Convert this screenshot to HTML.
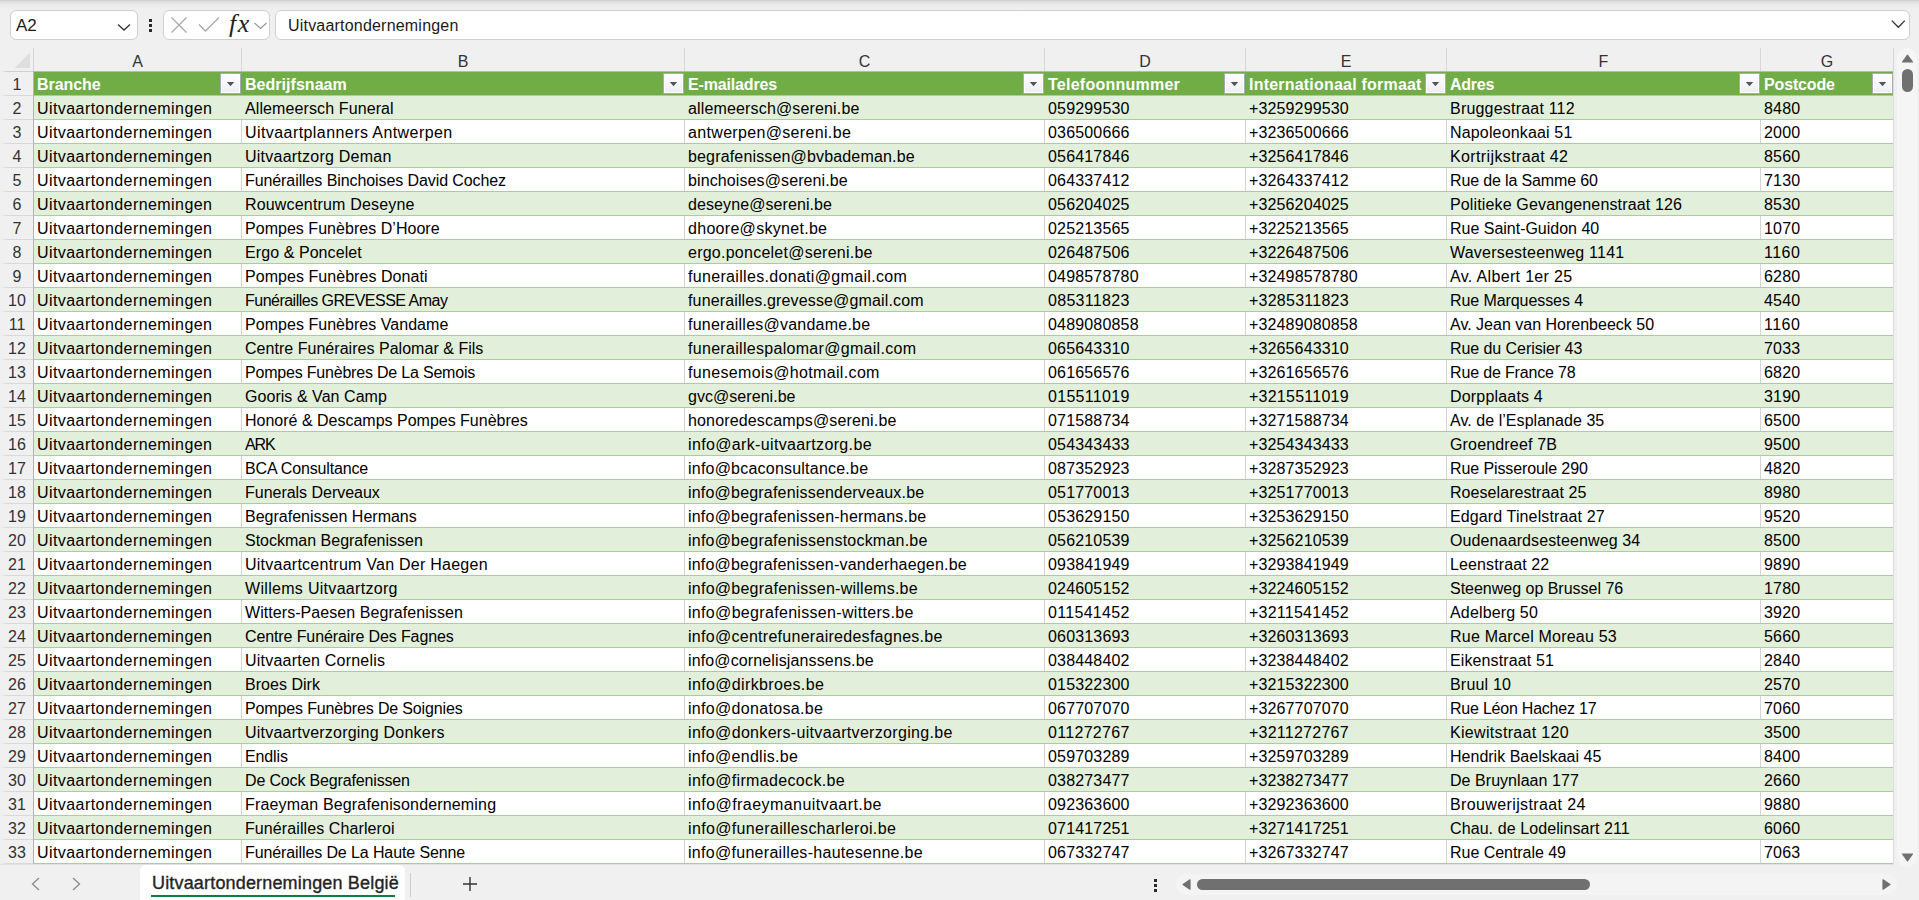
<!DOCTYPE html>
<html><head><meta charset="utf-8"><title>Excel</title>
<style>
*{margin:0;padding:0;box-sizing:border-box}
html,body{width:1919px;height:900px;overflow:hidden;background:#f0f0f0;font-family:"Liberation Sans",sans-serif;position:relative}
.a{position:absolute}
.t{position:absolute;white-space:nowrap;font-size:16px;line-height:24px;color:#000}
.h{position:absolute;white-space:nowrap;font-size:16px;line-height:24px;color:#fff;font-weight:bold}
.fb{position:absolute;width:21px;height:21px;border:1px solid #a9a7ba;background:linear-gradient(#ffffff,#eceef4);box-shadow:inset 0 0 0 1px #fff}
.rn{position:absolute;left:0;width:34px;text-align:center;font-size:16px;line-height:24px;color:#333}
.cl{position:absolute;top:48px;height:23px;text-align:center;font-size:16px;line-height:27px;color:#333}
</style></head><body>

<div class="a" style="left:0;top:0;width:1919px;height:10px;background:linear-gradient(#cbcbcb,#dedede 15%,#e9e9e9 45%,#f1f1f1 100%)"></div>
<div class="a" style="left:10px;top:10px;width:128px;height:30px;background:#fff;border:1px solid #cfcfcf;border-radius:6px"></div>
<div class="t" style="left:16px;top:14px;font-size:17px;color:#1a1a1a">A2</div>
<svg class="a" style="left:116px;top:22px" width="16" height="10" viewBox="0 0 16 10"><path d="M2 2.5 L8 8 L14 2.5" fill="none" stroke="#333" stroke-width="1.3"/></svg>
<div class="a" style="left:149px;top:19px;width:3px;height:3px;background:#2a2a2a"></div>
<div class="a" style="left:149px;top:24px;width:3px;height:3px;background:#2a2a2a"></div>
<div class="a" style="left:149px;top:29px;width:3px;height:3px;background:#2a2a2a"></div>
<div class="a" style="left:163px;top:10px;width:107px;height:30px;background:#fff;border:1px solid #cfcfcf;border-radius:6px"></div>
<svg class="a" style="left:170px;top:16px" width="18" height="18" viewBox="0 0 18 18"><path d="M1.5 1.5 L16.5 16.5 M16.5 1.5 L1.5 16.5" stroke="#a8a8a8" stroke-width="1.3" fill="none"/></svg>
<svg class="a" style="left:198px;top:16px" width="23" height="18" viewBox="0 0 23 18"><path d="M1 8.5 L7.5 15 L21 1.5" stroke="#a8a8a8" stroke-width="1.3" fill="none"/></svg>
<div class="a" style="left:229px;top:9px;font-family:'Liberation Serif',serif;font-style:italic;font-size:26px;letter-spacing:1.5px;line-height:30px;color:#222">fx</div>
<svg class="a" style="left:253px;top:21px" width="15" height="10" viewBox="0 0 15 10"><path d="M1.5 2 L7.5 7.5 L13.5 2" fill="none" stroke="#9a9a9a" stroke-width="1.2"/></svg>
<div class="a" style="left:275px;top:10px;width:1635px;height:30px;background:#fff;border:1px solid #cfcfcf;border-radius:6px"></div>
<div class="t" style="left:288px;top:14px;font-size:16px;letter-spacing:0.2px;color:#1a1a1a">Uitvaartondernemingen</div>
<svg class="a" style="left:1890px;top:18px" width="17" height="12" viewBox="0 0 17 12"><path d="M1.8 2.6 L8.3 9.2 L14.8 2.6" fill="none" stroke="#333" stroke-width="1.3"/></svg>
<svg class="a" style="left:14px;top:52px" width="17" height="16" viewBox="0 0 17 16"><path d="M0.5 16 L16 0.5 L16 16 Z" fill="#dedede"/></svg>
<div class="a" style="left:241px;top:48px;width:1px;height:23px;background:#d6d6d6"></div>
<div class="a" style="left:684px;top:48px;width:1px;height:23px;background:#d6d6d6"></div>
<div class="a" style="left:1044px;top:48px;width:1px;height:23px;background:#d6d6d6"></div>
<div class="a" style="left:1245px;top:48px;width:1px;height:23px;background:#d6d6d6"></div>
<div class="a" style="left:1446px;top:48px;width:1px;height:23px;background:#d6d6d6"></div>
<div class="a" style="left:1760px;top:48px;width:1px;height:23px;background:#d6d6d6"></div>
<div class="a" style="left:1893px;top:48px;width:1px;height:23px;background:#d6d6d6"></div>
<div class="cl" style="left:34px;width:207px">A</div>
<div class="cl" style="left:242px;width:442px">B</div>
<div class="cl" style="left:685px;width:359px">C</div>
<div class="cl" style="left:1045px;width:200px">D</div>
<div class="cl" style="left:1246px;width:200px">E</div>
<div class="cl" style="left:1447px;width:313px">F</div>
<div class="cl" style="left:1761px;width:132px">G</div>
<div class="a" style="left:0;top:71px;width:33px;height:1px;background:linear-gradient(to right,#f0f0f0,#cfcfcf 8px)"></div>
<div class="a" style="left:33px;top:71px;width:1860px;height:1px;background:#b9b6bd"></div>
<div class="a" style="left:33px;top:48px;width:1px;height:23px;background:#d6d6d6"></div>
<div class="a" style="left:33px;top:72px;width:1px;height:793px;background:#b4b4b4"></div>
<div class="a" style="left:34px;top:72px;width:1859px;height:23px;background:#70ad47"></div>
<div class="a" style="left:34px;top:95px;width:1859px;height:1px;background:#a9d08e"></div>
<div class="a" style="left:0;top:95px;width:33px;height:1px;background:linear-gradient(to right,#f0f0f0,#d9d9d9 8px)"></div>
<div class="rn" style="top:73px">1</div>
<div class="h" style="left:37px;top:73px;letter-spacing:-0.067px">Branche</div>
<div class="fb" style="left:220px;top:73px"><svg style="position:absolute;left:5px;top:7px" width="9" height="6" viewBox="0 0 9 6"><path d="M0.8 1 L8.2 1 L4.5 5.2 Z" fill="#555"/></svg></div>
<div class="h" style="left:245px;top:73px;letter-spacing:0.036px">Bedrijfsnaam</div>
<div class="fb" style="left:663px;top:73px"><svg style="position:absolute;left:5px;top:7px" width="9" height="6" viewBox="0 0 9 6"><path d="M0.8 1 L8.2 1 L4.5 5.2 Z" fill="#555"/></svg></div>
<div class="h" style="left:688px;top:73px;letter-spacing:-0.160px">E-mailadres</div>
<div class="fb" style="left:1023px;top:73px"><svg style="position:absolute;left:5px;top:7px" width="9" height="6" viewBox="0 0 9 6"><path d="M0.8 1 L8.2 1 L4.5 5.2 Z" fill="#555"/></svg></div>
<div class="h" style="left:1048px;top:73px;letter-spacing:0.246px">Telefoonnummer</div>
<div class="fb" style="left:1224px;top:73px"><svg style="position:absolute;left:5px;top:7px" width="9" height="6" viewBox="0 0 9 6"><path d="M0.8 1 L8.2 1 L4.5 5.2 Z" fill="#555"/></svg></div>
<div class="h" style="left:1249px;top:73px;letter-spacing:0.210px">Internationaal formaat</div>
<div class="fb" style="left:1425px;top:73px"><svg style="position:absolute;left:5px;top:7px" width="9" height="6" viewBox="0 0 9 6"><path d="M0.8 1 L8.2 1 L4.5 5.2 Z" fill="#555"/></svg></div>
<div class="h" style="left:1450px;top:73px;letter-spacing:-0.250px">Adres</div>
<div class="fb" style="left:1739px;top:73px"><svg style="position:absolute;left:5px;top:7px" width="9" height="6" viewBox="0 0 9 6"><path d="M0.8 1 L8.2 1 L4.5 5.2 Z" fill="#555"/></svg></div>
<div class="h" style="left:1764px;top:73px;letter-spacing:-0.143px">Postcode</div>
<div class="fb" style="left:1872px;top:73px"><svg style="position:absolute;left:5px;top:7px" width="9" height="6" viewBox="0 0 9 6"><path d="M0.8 1 L8.2 1 L4.5 5.2 Z" fill="#555"/></svg></div>
<div class="a" style="left:34px;top:96px;width:1859px;height:23px;background:#e2efda"></div>
<div class="a" style="left:34px;top:119px;width:1859px;height:1px;background:#a9d08e"></div>
<div class="a" style="left:0;top:119px;width:33px;height:1px;background:linear-gradient(to right,#f0f0f0,#d9d9d9 8px)"></div>
<div class="rn" style="top:97px">2</div>
<div class="t" style="left:37px;top:97px;letter-spacing:0.431px">Uitvaartondernemingen</div>
<div class="t" style="left:245px;top:97px;letter-spacing:0.108px">Allemeersch Funeral</div>
<div class="t" style="left:688px;top:97px;letter-spacing:0.152px">allemeersch@sereni.be</div>
<div class="t" style="left:1048px;top:97px;letter-spacing:0.176px">059299530</div>
<div class="t" style="left:1249px;top:97px;letter-spacing:0.135px">+3259299530</div>
<div class="t" style="left:1450px;top:97px;letter-spacing:0.204px">Bruggestraat 112</div>
<div class="t" style="left:1764px;top:97px;letter-spacing:0.176px">8480</div>
<div class="a" style="left:34px;top:120px;width:1859px;height:23px;background:#fff"></div>
<div class="a" style="left:241px;top:120px;width:1px;height:23px;background:#d4d4d4"></div>
<div class="a" style="left:684px;top:120px;width:1px;height:23px;background:#d4d4d4"></div>
<div class="a" style="left:1044px;top:120px;width:1px;height:23px;background:#d4d4d4"></div>
<div class="a" style="left:1245px;top:120px;width:1px;height:23px;background:#d4d4d4"></div>
<div class="a" style="left:1446px;top:120px;width:1px;height:23px;background:#d4d4d4"></div>
<div class="a" style="left:1760px;top:120px;width:1px;height:23px;background:#d4d4d4"></div>
<div class="a" style="left:34px;top:143px;width:1859px;height:1px;background:#a9d08e"></div>
<div class="a" style="left:0;top:143px;width:33px;height:1px;background:linear-gradient(to right,#f0f0f0,#d9d9d9 8px)"></div>
<div class="rn" style="top:121px">3</div>
<div class="t" style="left:37px;top:121px;letter-spacing:0.431px">Uitvaartondernemingen</div>
<div class="t" style="left:245px;top:121px;letter-spacing:0.426px">Uitvaartplanners Antwerpen</div>
<div class="t" style="left:688px;top:121px;letter-spacing:0.333px">antwerpen@sereni.be</div>
<div class="t" style="left:1048px;top:121px;letter-spacing:0.176px">036500666</div>
<div class="t" style="left:1249px;top:121px;letter-spacing:0.135px">+3236500666</div>
<div class="t" style="left:1450px;top:121px;letter-spacing:0.157px">Napoleonkaai 51</div>
<div class="t" style="left:1764px;top:121px;letter-spacing:0.176px">2000</div>
<div class="a" style="left:34px;top:144px;width:1859px;height:23px;background:#e2efda"></div>
<div class="a" style="left:34px;top:167px;width:1859px;height:1px;background:#a9d08e"></div>
<div class="a" style="left:0;top:167px;width:33px;height:1px;background:linear-gradient(to right,#f0f0f0,#d9d9d9 8px)"></div>
<div class="rn" style="top:145px">4</div>
<div class="t" style="left:37px;top:145px;letter-spacing:0.431px">Uitvaartondernemingen</div>
<div class="t" style="left:245px;top:145px;letter-spacing:0.237px">Uitvaartzorg Deman</div>
<div class="t" style="left:688px;top:145px;letter-spacing:0.159px">begrafenissen@bvbademan.be</div>
<div class="t" style="left:1048px;top:145px;letter-spacing:0.176px">056417846</div>
<div class="t" style="left:1249px;top:145px;letter-spacing:0.135px">+3256417846</div>
<div class="t" style="left:1450px;top:145px;letter-spacing:0.372px">Kortrijkstraat 42</div>
<div class="t" style="left:1764px;top:145px;letter-spacing:0.176px">8560</div>
<div class="a" style="left:34px;top:168px;width:1859px;height:23px;background:#fff"></div>
<div class="a" style="left:241px;top:168px;width:1px;height:23px;background:#d4d4d4"></div>
<div class="a" style="left:684px;top:168px;width:1px;height:23px;background:#d4d4d4"></div>
<div class="a" style="left:1044px;top:168px;width:1px;height:23px;background:#d4d4d4"></div>
<div class="a" style="left:1245px;top:168px;width:1px;height:23px;background:#d4d4d4"></div>
<div class="a" style="left:1446px;top:168px;width:1px;height:23px;background:#d4d4d4"></div>
<div class="a" style="left:1760px;top:168px;width:1px;height:23px;background:#d4d4d4"></div>
<div class="a" style="left:34px;top:191px;width:1859px;height:1px;background:#a9d08e"></div>
<div class="a" style="left:0;top:191px;width:33px;height:1px;background:linear-gradient(to right,#f0f0f0,#d9d9d9 8px)"></div>
<div class="rn" style="top:169px">5</div>
<div class="t" style="left:37px;top:169px;letter-spacing:0.431px">Uitvaartondernemingen</div>
<div class="t" style="left:245px;top:169px;letter-spacing:-0.089px">Funérailles Binchoises David Cochez</div>
<div class="t" style="left:688px;top:169px;letter-spacing:0.108px">binchoises@sereni.be</div>
<div class="t" style="left:1048px;top:169px;letter-spacing:0.176px">064337412</div>
<div class="t" style="left:1249px;top:169px;letter-spacing:0.135px">+3264337412</div>
<div class="t" style="left:1450px;top:169px;letter-spacing:-0.144px">Rue de la Samme 60</div>
<div class="t" style="left:1764px;top:169px;letter-spacing:0.176px">7130</div>
<div class="a" style="left:34px;top:192px;width:1859px;height:23px;background:#e2efda"></div>
<div class="a" style="left:34px;top:215px;width:1859px;height:1px;background:#a9d08e"></div>
<div class="a" style="left:0;top:215px;width:33px;height:1px;background:linear-gradient(to right,#f0f0f0,#d9d9d9 8px)"></div>
<div class="rn" style="top:193px">6</div>
<div class="t" style="left:37px;top:193px;letter-spacing:0.431px">Uitvaartondernemingen</div>
<div class="t" style="left:245px;top:193px;letter-spacing:0.171px">Rouwcentrum Deseyne</div>
<div class="t" style="left:688px;top:193px;letter-spacing:0.091px">deseyne@sereni.be</div>
<div class="t" style="left:1048px;top:193px;letter-spacing:0.176px">056204025</div>
<div class="t" style="left:1249px;top:193px;letter-spacing:0.135px">+3256204025</div>
<div class="t" style="left:1450px;top:193px;letter-spacing:0.144px">Politieke Gevangenenstraat 126</div>
<div class="t" style="left:1764px;top:193px;letter-spacing:0.176px">8530</div>
<div class="a" style="left:34px;top:216px;width:1859px;height:23px;background:#fff"></div>
<div class="a" style="left:241px;top:216px;width:1px;height:23px;background:#d4d4d4"></div>
<div class="a" style="left:684px;top:216px;width:1px;height:23px;background:#d4d4d4"></div>
<div class="a" style="left:1044px;top:216px;width:1px;height:23px;background:#d4d4d4"></div>
<div class="a" style="left:1245px;top:216px;width:1px;height:23px;background:#d4d4d4"></div>
<div class="a" style="left:1446px;top:216px;width:1px;height:23px;background:#d4d4d4"></div>
<div class="a" style="left:1760px;top:216px;width:1px;height:23px;background:#d4d4d4"></div>
<div class="a" style="left:34px;top:239px;width:1859px;height:1px;background:#a9d08e"></div>
<div class="a" style="left:0;top:239px;width:33px;height:1px;background:linear-gradient(to right,#f0f0f0,#d9d9d9 8px)"></div>
<div class="rn" style="top:217px">7</div>
<div class="t" style="left:37px;top:217px;letter-spacing:0.431px">Uitvaartondernemingen</div>
<div class="t" style="left:245px;top:217px;letter-spacing:0.033px">Pompes Funèbres D’Hoore</div>
<div class="t" style="left:688px;top:217px;letter-spacing:0.297px">dhoore@skynet.be</div>
<div class="t" style="left:1048px;top:217px;letter-spacing:0.176px">025213565</div>
<div class="t" style="left:1249px;top:217px;letter-spacing:0.135px">+3225213565</div>
<div class="t" style="left:1450px;top:217px;letter-spacing:-0.015px">Rue Saint-Guidon 40</div>
<div class="t" style="left:1764px;top:217px;letter-spacing:0.176px">1070</div>
<div class="a" style="left:34px;top:240px;width:1859px;height:23px;background:#e2efda"></div>
<div class="a" style="left:34px;top:263px;width:1859px;height:1px;background:#a9d08e"></div>
<div class="a" style="left:0;top:263px;width:33px;height:1px;background:linear-gradient(to right,#f0f0f0,#d9d9d9 8px)"></div>
<div class="rn" style="top:241px">8</div>
<div class="t" style="left:37px;top:241px;letter-spacing:0.431px">Uitvaartondernemingen</div>
<div class="t" style="left:245px;top:241px;letter-spacing:0.077px">Ergo &amp; Poncelet</div>
<div class="t" style="left:688px;top:241px;letter-spacing:0.249px">ergo.poncelet@sereni.be</div>
<div class="t" style="left:1048px;top:241px;letter-spacing:0.176px">026487506</div>
<div class="t" style="left:1249px;top:241px;letter-spacing:0.135px">+3226487506</div>
<div class="t" style="left:1450px;top:241px;letter-spacing:0.226px">Waversesteenweg 1141</div>
<div class="t" style="left:1764px;top:241px;letter-spacing:0.473px">1160</div>
<div class="a" style="left:34px;top:264px;width:1859px;height:23px;background:#fff"></div>
<div class="a" style="left:241px;top:264px;width:1px;height:23px;background:#d4d4d4"></div>
<div class="a" style="left:684px;top:264px;width:1px;height:23px;background:#d4d4d4"></div>
<div class="a" style="left:1044px;top:264px;width:1px;height:23px;background:#d4d4d4"></div>
<div class="a" style="left:1245px;top:264px;width:1px;height:23px;background:#d4d4d4"></div>
<div class="a" style="left:1446px;top:264px;width:1px;height:23px;background:#d4d4d4"></div>
<div class="a" style="left:1760px;top:264px;width:1px;height:23px;background:#d4d4d4"></div>
<div class="a" style="left:34px;top:287px;width:1859px;height:1px;background:#a9d08e"></div>
<div class="a" style="left:0;top:287px;width:33px;height:1px;background:linear-gradient(to right,#f0f0f0,#d9d9d9 8px)"></div>
<div class="rn" style="top:265px">9</div>
<div class="t" style="left:37px;top:265px;letter-spacing:0.431px">Uitvaartondernemingen</div>
<div class="t" style="left:245px;top:265px;letter-spacing:0.048px">Pompes Funèbres Donati</div>
<div class="t" style="left:688px;top:265px;letter-spacing:0.321px">funerailles.donati@gmail.com</div>
<div class="t" style="left:1048px;top:265px;letter-spacing:0.176px">0498578780</div>
<div class="t" style="left:1249px;top:265px;letter-spacing:0.138px">+32498578780</div>
<div class="t" style="left:1450px;top:265px;letter-spacing:0.335px">Av. Albert 1er 25</div>
<div class="t" style="left:1764px;top:265px;letter-spacing:0.176px">6280</div>
<div class="a" style="left:34px;top:288px;width:1859px;height:23px;background:#e2efda"></div>
<div class="a" style="left:34px;top:311px;width:1859px;height:1px;background:#a9d08e"></div>
<div class="a" style="left:0;top:311px;width:33px;height:1px;background:linear-gradient(to right,#f0f0f0,#d9d9d9 8px)"></div>
<div class="rn" style="top:289px">10</div>
<div class="t" style="left:37px;top:289px;letter-spacing:0.431px">Uitvaartondernemingen</div>
<div class="t" style="left:245px;top:289px;letter-spacing:-0.513px">Funérailles GREVESSE Amay</div>
<div class="t" style="left:688px;top:289px;letter-spacing:0.141px">funerailles.grevesse@gmail.com</div>
<div class="t" style="left:1048px;top:289px;letter-spacing:0.308px">085311823</div>
<div class="t" style="left:1249px;top:289px;letter-spacing:0.243px">+3285311823</div>
<div class="t" style="left:1450px;top:289px;letter-spacing:-0.080px">Rue Marquesses 4</div>
<div class="t" style="left:1764px;top:289px;letter-spacing:0.176px">4540</div>
<div class="a" style="left:34px;top:312px;width:1859px;height:23px;background:#fff"></div>
<div class="a" style="left:241px;top:312px;width:1px;height:23px;background:#d4d4d4"></div>
<div class="a" style="left:684px;top:312px;width:1px;height:23px;background:#d4d4d4"></div>
<div class="a" style="left:1044px;top:312px;width:1px;height:23px;background:#d4d4d4"></div>
<div class="a" style="left:1245px;top:312px;width:1px;height:23px;background:#d4d4d4"></div>
<div class="a" style="left:1446px;top:312px;width:1px;height:23px;background:#d4d4d4"></div>
<div class="a" style="left:1760px;top:312px;width:1px;height:23px;background:#d4d4d4"></div>
<div class="a" style="left:34px;top:335px;width:1859px;height:1px;background:#a9d08e"></div>
<div class="a" style="left:0;top:335px;width:33px;height:1px;background:linear-gradient(to right,#f0f0f0,#d9d9d9 8px)"></div>
<div class="rn" style="top:313px">11</div>
<div class="t" style="left:37px;top:313px;letter-spacing:0.431px">Uitvaartondernemingen</div>
<div class="t" style="left:245px;top:313px;letter-spacing:0.036px">Pompes Funèbres Vandame</div>
<div class="t" style="left:688px;top:313px;letter-spacing:0.234px">funerailles@vandame.be</div>
<div class="t" style="left:1048px;top:313px;letter-spacing:0.176px">0489080858</div>
<div class="t" style="left:1249px;top:313px;letter-spacing:0.138px">+32489080858</div>
<div class="t" style="left:1450px;top:313px;letter-spacing:0.004px">Av. Jean van Horenbeeck 50</div>
<div class="t" style="left:1764px;top:313px;letter-spacing:0.473px">1160</div>
<div class="a" style="left:34px;top:336px;width:1859px;height:23px;background:#e2efda"></div>
<div class="a" style="left:34px;top:359px;width:1859px;height:1px;background:#a9d08e"></div>
<div class="a" style="left:0;top:359px;width:33px;height:1px;background:linear-gradient(to right,#f0f0f0,#d9d9d9 8px)"></div>
<div class="rn" style="top:337px">12</div>
<div class="t" style="left:37px;top:337px;letter-spacing:0.431px">Uitvaartondernemingen</div>
<div class="t" style="left:245px;top:337px;letter-spacing:0.031px">Centre Funéraires Palomar &amp; Fils</div>
<div class="t" style="left:688px;top:337px;letter-spacing:0.301px">funeraillespalomar@gmail.com</div>
<div class="t" style="left:1048px;top:337px;letter-spacing:0.176px">065643310</div>
<div class="t" style="left:1249px;top:337px;letter-spacing:0.135px">+3265643310</div>
<div class="t" style="left:1450px;top:337px;letter-spacing:-0.066px">Rue du Cerisier 43</div>
<div class="t" style="left:1764px;top:337px;letter-spacing:0.176px">7033</div>
<div class="a" style="left:34px;top:360px;width:1859px;height:23px;background:#fff"></div>
<div class="a" style="left:241px;top:360px;width:1px;height:23px;background:#d4d4d4"></div>
<div class="a" style="left:684px;top:360px;width:1px;height:23px;background:#d4d4d4"></div>
<div class="a" style="left:1044px;top:360px;width:1px;height:23px;background:#d4d4d4"></div>
<div class="a" style="left:1245px;top:360px;width:1px;height:23px;background:#d4d4d4"></div>
<div class="a" style="left:1446px;top:360px;width:1px;height:23px;background:#d4d4d4"></div>
<div class="a" style="left:1760px;top:360px;width:1px;height:23px;background:#d4d4d4"></div>
<div class="a" style="left:34px;top:383px;width:1859px;height:1px;background:#a9d08e"></div>
<div class="a" style="left:0;top:383px;width:33px;height:1px;background:linear-gradient(to right,#f0f0f0,#d9d9d9 8px)"></div>
<div class="rn" style="top:361px">13</div>
<div class="t" style="left:37px;top:361px;letter-spacing:0.431px">Uitvaartondernemingen</div>
<div class="t" style="left:245px;top:361px;letter-spacing:-0.200px">Pompes Funèbres De La Semois</div>
<div class="t" style="left:688px;top:361px;letter-spacing:0.340px">funesemois@hotmail.com</div>
<div class="t" style="left:1048px;top:361px;letter-spacing:0.176px">061656576</div>
<div class="t" style="left:1249px;top:361px;letter-spacing:0.135px">+3261656576</div>
<div class="t" style="left:1450px;top:361px;letter-spacing:-0.156px">Rue de France 78</div>
<div class="t" style="left:1764px;top:361px;letter-spacing:0.176px">6820</div>
<div class="a" style="left:34px;top:384px;width:1859px;height:23px;background:#e2efda"></div>
<div class="a" style="left:34px;top:407px;width:1859px;height:1px;background:#a9d08e"></div>
<div class="a" style="left:0;top:407px;width:33px;height:1px;background:linear-gradient(to right,#f0f0f0,#d9d9d9 8px)"></div>
<div class="rn" style="top:385px">14</div>
<div class="t" style="left:37px;top:385px;letter-spacing:0.431px">Uitvaartondernemingen</div>
<div class="t" style="left:245px;top:385px;letter-spacing:0.047px">Gooris &amp; Van Camp</div>
<div class="t" style="left:688px;top:385px;letter-spacing:0.045px">gvc@sereni.be</div>
<div class="t" style="left:1048px;top:385px;letter-spacing:0.308px">015511019</div>
<div class="t" style="left:1249px;top:385px;letter-spacing:0.243px">+3215511019</div>
<div class="t" style="left:1450px;top:385px;letter-spacing:0.182px">Dorpplaats 4</div>
<div class="t" style="left:1764px;top:385px;letter-spacing:0.176px">3190</div>
<div class="a" style="left:34px;top:408px;width:1859px;height:23px;background:#fff"></div>
<div class="a" style="left:241px;top:408px;width:1px;height:23px;background:#d4d4d4"></div>
<div class="a" style="left:684px;top:408px;width:1px;height:23px;background:#d4d4d4"></div>
<div class="a" style="left:1044px;top:408px;width:1px;height:23px;background:#d4d4d4"></div>
<div class="a" style="left:1245px;top:408px;width:1px;height:23px;background:#d4d4d4"></div>
<div class="a" style="left:1446px;top:408px;width:1px;height:23px;background:#d4d4d4"></div>
<div class="a" style="left:1760px;top:408px;width:1px;height:23px;background:#d4d4d4"></div>
<div class="a" style="left:34px;top:431px;width:1859px;height:1px;background:#a9d08e"></div>
<div class="a" style="left:0;top:431px;width:33px;height:1px;background:linear-gradient(to right,#f0f0f0,#d9d9d9 8px)"></div>
<div class="rn" style="top:409px">15</div>
<div class="t" style="left:37px;top:409px;letter-spacing:0.431px">Uitvaartondernemingen</div>
<div class="t" style="left:245px;top:409px;letter-spacing:-0.004px">Honoré &amp; Descamps Pompes Funèbres</div>
<div class="t" style="left:688px;top:409px;letter-spacing:0.154px">honoredescamps@sereni.be</div>
<div class="t" style="left:1048px;top:409px;letter-spacing:0.176px">071588734</div>
<div class="t" style="left:1249px;top:409px;letter-spacing:0.135px">+3271588734</div>
<div class="t" style="left:1450px;top:409px;letter-spacing:0.047px">Av. de l’Esplanade 35</div>
<div class="t" style="left:1764px;top:409px;letter-spacing:0.176px">6500</div>
<div class="a" style="left:34px;top:432px;width:1859px;height:23px;background:#e2efda"></div>
<div class="a" style="left:34px;top:455px;width:1859px;height:1px;background:#a9d08e"></div>
<div class="a" style="left:0;top:455px;width:33px;height:1px;background:linear-gradient(to right,#f0f0f0,#d9d9d9 8px)"></div>
<div class="rn" style="top:433px">16</div>
<div class="t" style="left:37px;top:433px;letter-spacing:0.431px">Uitvaartondernemingen</div>
<div class="t" style="left:245px;top:433px;letter-spacing:-1.166px">ARK</div>
<div class="t" style="left:688px;top:433px;letter-spacing:0.354px">info@ark-uitvaartzorg.be</div>
<div class="t" style="left:1048px;top:433px;letter-spacing:0.176px">054343433</div>
<div class="t" style="left:1249px;top:433px;letter-spacing:0.135px">+3254343433</div>
<div class="t" style="left:1450px;top:433px;letter-spacing:0.165px">Groendreef 7B</div>
<div class="t" style="left:1764px;top:433px;letter-spacing:0.176px">9500</div>
<div class="a" style="left:34px;top:456px;width:1859px;height:23px;background:#fff"></div>
<div class="a" style="left:241px;top:456px;width:1px;height:23px;background:#d4d4d4"></div>
<div class="a" style="left:684px;top:456px;width:1px;height:23px;background:#d4d4d4"></div>
<div class="a" style="left:1044px;top:456px;width:1px;height:23px;background:#d4d4d4"></div>
<div class="a" style="left:1245px;top:456px;width:1px;height:23px;background:#d4d4d4"></div>
<div class="a" style="left:1446px;top:456px;width:1px;height:23px;background:#d4d4d4"></div>
<div class="a" style="left:1760px;top:456px;width:1px;height:23px;background:#d4d4d4"></div>
<div class="a" style="left:34px;top:479px;width:1859px;height:1px;background:#a9d08e"></div>
<div class="a" style="left:0;top:479px;width:33px;height:1px;background:linear-gradient(to right,#f0f0f0,#d9d9d9 8px)"></div>
<div class="rn" style="top:457px">17</div>
<div class="t" style="left:37px;top:457px;letter-spacing:0.431px">Uitvaartondernemingen</div>
<div class="t" style="left:245px;top:457px;letter-spacing:-0.155px">BCA Consultance</div>
<div class="t" style="left:688px;top:457px;letter-spacing:0.217px">info@bcaconsultance.be</div>
<div class="t" style="left:1048px;top:457px;letter-spacing:0.176px">087352923</div>
<div class="t" style="left:1249px;top:457px;letter-spacing:0.135px">+3287352923</div>
<div class="t" style="left:1450px;top:457px;letter-spacing:-0.105px">Rue Pisseroule 290</div>
<div class="t" style="left:1764px;top:457px;letter-spacing:0.176px">4820</div>
<div class="a" style="left:34px;top:480px;width:1859px;height:23px;background:#e2efda"></div>
<div class="a" style="left:34px;top:503px;width:1859px;height:1px;background:#a9d08e"></div>
<div class="a" style="left:0;top:503px;width:33px;height:1px;background:linear-gradient(to right,#f0f0f0,#d9d9d9 8px)"></div>
<div class="rn" style="top:481px">18</div>
<div class="t" style="left:37px;top:481px;letter-spacing:0.431px">Uitvaartondernemingen</div>
<div class="t" style="left:245px;top:481px;letter-spacing:-0.019px">Funerals Derveaux</div>
<div class="t" style="left:688px;top:481px;letter-spacing:0.198px">info@begrafenissenderveaux.be</div>
<div class="t" style="left:1048px;top:481px;letter-spacing:0.176px">051770013</div>
<div class="t" style="left:1249px;top:481px;letter-spacing:0.135px">+3251770013</div>
<div class="t" style="left:1450px;top:481px;letter-spacing:0.068px">Roeselarestraat 25</div>
<div class="t" style="left:1764px;top:481px;letter-spacing:0.176px">8980</div>
<div class="a" style="left:34px;top:504px;width:1859px;height:23px;background:#fff"></div>
<div class="a" style="left:241px;top:504px;width:1px;height:23px;background:#d4d4d4"></div>
<div class="a" style="left:684px;top:504px;width:1px;height:23px;background:#d4d4d4"></div>
<div class="a" style="left:1044px;top:504px;width:1px;height:23px;background:#d4d4d4"></div>
<div class="a" style="left:1245px;top:504px;width:1px;height:23px;background:#d4d4d4"></div>
<div class="a" style="left:1446px;top:504px;width:1px;height:23px;background:#d4d4d4"></div>
<div class="a" style="left:1760px;top:504px;width:1px;height:23px;background:#d4d4d4"></div>
<div class="a" style="left:34px;top:527px;width:1859px;height:1px;background:#a9d08e"></div>
<div class="a" style="left:0;top:527px;width:33px;height:1px;background:linear-gradient(to right,#f0f0f0,#d9d9d9 8px)"></div>
<div class="rn" style="top:505px">19</div>
<div class="t" style="left:37px;top:505px;letter-spacing:0.431px">Uitvaartondernemingen</div>
<div class="t" style="left:245px;top:505px;letter-spacing:0.007px">Begrafenissen Hermans</div>
<div class="t" style="left:688px;top:505px;letter-spacing:0.208px">info@begrafenissen-hermans.be</div>
<div class="t" style="left:1048px;top:505px;letter-spacing:0.176px">053629150</div>
<div class="t" style="left:1249px;top:505px;letter-spacing:0.135px">+3253629150</div>
<div class="t" style="left:1450px;top:505px;letter-spacing:0.124px">Edgard Tinelstraat 27</div>
<div class="t" style="left:1764px;top:505px;letter-spacing:0.176px">9520</div>
<div class="a" style="left:34px;top:528px;width:1859px;height:23px;background:#e2efda"></div>
<div class="a" style="left:34px;top:551px;width:1859px;height:1px;background:#a9d08e"></div>
<div class="a" style="left:0;top:551px;width:33px;height:1px;background:linear-gradient(to right,#f0f0f0,#d9d9d9 8px)"></div>
<div class="rn" style="top:529px">20</div>
<div class="t" style="left:37px;top:529px;letter-spacing:0.431px">Uitvaartondernemingen</div>
<div class="t" style="left:245px;top:529px;letter-spacing:-0.001px">Stockman Begrafenissen</div>
<div class="t" style="left:688px;top:529px;letter-spacing:0.216px">info@begrafenissenstockman.be</div>
<div class="t" style="left:1048px;top:529px;letter-spacing:0.176px">056210539</div>
<div class="t" style="left:1249px;top:529px;letter-spacing:0.135px">+3256210539</div>
<div class="t" style="left:1450px;top:529px;letter-spacing:0.117px">Oudenaardsesteenweg 34</div>
<div class="t" style="left:1764px;top:529px;letter-spacing:0.176px">8500</div>
<div class="a" style="left:34px;top:552px;width:1859px;height:23px;background:#fff"></div>
<div class="a" style="left:241px;top:552px;width:1px;height:23px;background:#d4d4d4"></div>
<div class="a" style="left:684px;top:552px;width:1px;height:23px;background:#d4d4d4"></div>
<div class="a" style="left:1044px;top:552px;width:1px;height:23px;background:#d4d4d4"></div>
<div class="a" style="left:1245px;top:552px;width:1px;height:23px;background:#d4d4d4"></div>
<div class="a" style="left:1446px;top:552px;width:1px;height:23px;background:#d4d4d4"></div>
<div class="a" style="left:1760px;top:552px;width:1px;height:23px;background:#d4d4d4"></div>
<div class="a" style="left:34px;top:575px;width:1859px;height:1px;background:#a9d08e"></div>
<div class="a" style="left:0;top:575px;width:33px;height:1px;background:linear-gradient(to right,#f0f0f0,#d9d9d9 8px)"></div>
<div class="rn" style="top:553px">21</div>
<div class="t" style="left:37px;top:553px;letter-spacing:0.431px">Uitvaartondernemingen</div>
<div class="t" style="left:245px;top:553px;letter-spacing:0.247px">Uitvaartcentrum Van Der Haegen</div>
<div class="t" style="left:688px;top:553px;letter-spacing:0.188px">info@begrafenissen-vanderhaegen.be</div>
<div class="t" style="left:1048px;top:553px;letter-spacing:0.176px">093841949</div>
<div class="t" style="left:1249px;top:553px;letter-spacing:0.135px">+3293841949</div>
<div class="t" style="left:1450px;top:553px;letter-spacing:0.115px">Leenstraat 22</div>
<div class="t" style="left:1764px;top:553px;letter-spacing:0.176px">9890</div>
<div class="a" style="left:34px;top:576px;width:1859px;height:23px;background:#e2efda"></div>
<div class="a" style="left:34px;top:599px;width:1859px;height:1px;background:#a9d08e"></div>
<div class="a" style="left:0;top:599px;width:33px;height:1px;background:linear-gradient(to right,#f0f0f0,#d9d9d9 8px)"></div>
<div class="rn" style="top:577px">22</div>
<div class="t" style="left:37px;top:577px;letter-spacing:0.431px">Uitvaartondernemingen</div>
<div class="t" style="left:245px;top:577px;letter-spacing:0.305px">Willems Uitvaartzorg</div>
<div class="t" style="left:688px;top:577px;letter-spacing:0.253px">info@begrafenissen-willems.be</div>
<div class="t" style="left:1048px;top:577px;letter-spacing:0.176px">024605152</div>
<div class="t" style="left:1249px;top:577px;letter-spacing:0.135px">+3224605152</div>
<div class="t" style="left:1450px;top:577px;letter-spacing:-0.013px">Steenweg op Brussel 76</div>
<div class="t" style="left:1764px;top:577px;letter-spacing:0.176px">1780</div>
<div class="a" style="left:34px;top:600px;width:1859px;height:23px;background:#fff"></div>
<div class="a" style="left:241px;top:600px;width:1px;height:23px;background:#d4d4d4"></div>
<div class="a" style="left:684px;top:600px;width:1px;height:23px;background:#d4d4d4"></div>
<div class="a" style="left:1044px;top:600px;width:1px;height:23px;background:#d4d4d4"></div>
<div class="a" style="left:1245px;top:600px;width:1px;height:23px;background:#d4d4d4"></div>
<div class="a" style="left:1446px;top:600px;width:1px;height:23px;background:#d4d4d4"></div>
<div class="a" style="left:1760px;top:600px;width:1px;height:23px;background:#d4d4d4"></div>
<div class="a" style="left:34px;top:623px;width:1859px;height:1px;background:#a9d08e"></div>
<div class="a" style="left:0;top:623px;width:33px;height:1px;background:linear-gradient(to right,#f0f0f0,#d9d9d9 8px)"></div>
<div class="rn" style="top:601px">23</div>
<div class="t" style="left:37px;top:601px;letter-spacing:0.431px">Uitvaartondernemingen</div>
<div class="t" style="left:245px;top:601px;letter-spacing:0.065px">Witters-Paesen Begrafenissen</div>
<div class="t" style="left:688px;top:601px;letter-spacing:0.319px">info@begrafenissen-witters.be</div>
<div class="t" style="left:1048px;top:601px;letter-spacing:0.308px">011541452</div>
<div class="t" style="left:1249px;top:601px;letter-spacing:0.243px">+3211541452</div>
<div class="t" style="left:1450px;top:601px;letter-spacing:0.153px">Adelberg 50</div>
<div class="t" style="left:1764px;top:601px;letter-spacing:0.176px">3920</div>
<div class="a" style="left:34px;top:624px;width:1859px;height:23px;background:#e2efda"></div>
<div class="a" style="left:34px;top:647px;width:1859px;height:1px;background:#a9d08e"></div>
<div class="a" style="left:0;top:647px;width:33px;height:1px;background:linear-gradient(to right,#f0f0f0,#d9d9d9 8px)"></div>
<div class="rn" style="top:625px">24</div>
<div class="t" style="left:37px;top:625px;letter-spacing:0.431px">Uitvaartondernemingen</div>
<div class="t" style="left:245px;top:625px;letter-spacing:-0.111px">Centre Funéraire Des Fagnes</div>
<div class="t" style="left:688px;top:625px;letter-spacing:0.280px">info@centrefunerairedesfagnes.be</div>
<div class="t" style="left:1048px;top:625px;letter-spacing:0.176px">060313693</div>
<div class="t" style="left:1249px;top:625px;letter-spacing:0.135px">+3260313693</div>
<div class="t" style="left:1450px;top:625px;letter-spacing:0.211px">Rue Marcel Moreau 53</div>
<div class="t" style="left:1764px;top:625px;letter-spacing:0.176px">5660</div>
<div class="a" style="left:34px;top:648px;width:1859px;height:23px;background:#fff"></div>
<div class="a" style="left:241px;top:648px;width:1px;height:23px;background:#d4d4d4"></div>
<div class="a" style="left:684px;top:648px;width:1px;height:23px;background:#d4d4d4"></div>
<div class="a" style="left:1044px;top:648px;width:1px;height:23px;background:#d4d4d4"></div>
<div class="a" style="left:1245px;top:648px;width:1px;height:23px;background:#d4d4d4"></div>
<div class="a" style="left:1446px;top:648px;width:1px;height:23px;background:#d4d4d4"></div>
<div class="a" style="left:1760px;top:648px;width:1px;height:23px;background:#d4d4d4"></div>
<div class="a" style="left:34px;top:671px;width:1859px;height:1px;background:#a9d08e"></div>
<div class="a" style="left:0;top:671px;width:33px;height:1px;background:linear-gradient(to right,#f0f0f0,#d9d9d9 8px)"></div>
<div class="rn" style="top:649px">25</div>
<div class="t" style="left:37px;top:649px;letter-spacing:0.431px">Uitvaartondernemingen</div>
<div class="t" style="left:245px;top:649px;letter-spacing:0.219px">Uitvaarten Cornelis</div>
<div class="t" style="left:688px;top:649px;letter-spacing:0.130px">info@cornelisjanssens.be</div>
<div class="t" style="left:1048px;top:649px;letter-spacing:0.176px">038448402</div>
<div class="t" style="left:1249px;top:649px;letter-spacing:0.135px">+3238448402</div>
<div class="t" style="left:1450px;top:649px;letter-spacing:0.116px">Eikenstraat 51</div>
<div class="t" style="left:1764px;top:649px;letter-spacing:0.176px">2840</div>
<div class="a" style="left:34px;top:672px;width:1859px;height:23px;background:#e2efda"></div>
<div class="a" style="left:34px;top:695px;width:1859px;height:1px;background:#a9d08e"></div>
<div class="a" style="left:0;top:695px;width:33px;height:1px;background:linear-gradient(to right,#f0f0f0,#d9d9d9 8px)"></div>
<div class="rn" style="top:673px">26</div>
<div class="t" style="left:37px;top:673px;letter-spacing:0.431px">Uitvaartondernemingen</div>
<div class="t" style="left:245px;top:673px;letter-spacing:0.023px">Broes Dirk</div>
<div class="t" style="left:688px;top:673px;letter-spacing:0.359px">info@dirkbroes.be</div>
<div class="t" style="left:1048px;top:673px;letter-spacing:0.176px">015322300</div>
<div class="t" style="left:1249px;top:673px;letter-spacing:0.135px">+3215322300</div>
<div class="t" style="left:1450px;top:673px;letter-spacing:0.189px">Bruul 10</div>
<div class="t" style="left:1764px;top:673px;letter-spacing:0.176px">2570</div>
<div class="a" style="left:34px;top:696px;width:1859px;height:23px;background:#fff"></div>
<div class="a" style="left:241px;top:696px;width:1px;height:23px;background:#d4d4d4"></div>
<div class="a" style="left:684px;top:696px;width:1px;height:23px;background:#d4d4d4"></div>
<div class="a" style="left:1044px;top:696px;width:1px;height:23px;background:#d4d4d4"></div>
<div class="a" style="left:1245px;top:696px;width:1px;height:23px;background:#d4d4d4"></div>
<div class="a" style="left:1446px;top:696px;width:1px;height:23px;background:#d4d4d4"></div>
<div class="a" style="left:1760px;top:696px;width:1px;height:23px;background:#d4d4d4"></div>
<div class="a" style="left:34px;top:719px;width:1859px;height:1px;background:#a9d08e"></div>
<div class="a" style="left:0;top:719px;width:33px;height:1px;background:linear-gradient(to right,#f0f0f0,#d9d9d9 8px)"></div>
<div class="rn" style="top:697px">27</div>
<div class="t" style="left:37px;top:697px;letter-spacing:0.431px">Uitvaartondernemingen</div>
<div class="t" style="left:245px;top:697px;letter-spacing:-0.144px">Pompes Funèbres De Soignies</div>
<div class="t" style="left:688px;top:697px;letter-spacing:0.313px">info@donatosa.be</div>
<div class="t" style="left:1048px;top:697px;letter-spacing:0.176px">067707070</div>
<div class="t" style="left:1249px;top:697px;letter-spacing:0.135px">+3267707070</div>
<div class="t" style="left:1450px;top:697px;letter-spacing:-0.223px">Rue Léon Hachez 17</div>
<div class="t" style="left:1764px;top:697px;letter-spacing:0.176px">7060</div>
<div class="a" style="left:34px;top:720px;width:1859px;height:23px;background:#e2efda"></div>
<div class="a" style="left:34px;top:743px;width:1859px;height:1px;background:#a9d08e"></div>
<div class="a" style="left:0;top:743px;width:33px;height:1px;background:linear-gradient(to right,#f0f0f0,#d9d9d9 8px)"></div>
<div class="rn" style="top:721px">28</div>
<div class="t" style="left:37px;top:721px;letter-spacing:0.431px">Uitvaartondernemingen</div>
<div class="t" style="left:245px;top:721px;letter-spacing:0.224px">Uitvaartverzorging Donkers</div>
<div class="t" style="left:688px;top:721px;letter-spacing:0.324px">info@donkers-uitvaartverzorging.be</div>
<div class="t" style="left:1048px;top:721px;letter-spacing:0.308px">011272767</div>
<div class="t" style="left:1249px;top:721px;letter-spacing:0.243px">+3211272767</div>
<div class="t" style="left:1450px;top:721px;letter-spacing:0.316px">Kiewitstraat 120</div>
<div class="t" style="left:1764px;top:721px;letter-spacing:0.176px">3500</div>
<div class="a" style="left:34px;top:744px;width:1859px;height:23px;background:#fff"></div>
<div class="a" style="left:241px;top:744px;width:1px;height:23px;background:#d4d4d4"></div>
<div class="a" style="left:684px;top:744px;width:1px;height:23px;background:#d4d4d4"></div>
<div class="a" style="left:1044px;top:744px;width:1px;height:23px;background:#d4d4d4"></div>
<div class="a" style="left:1245px;top:744px;width:1px;height:23px;background:#d4d4d4"></div>
<div class="a" style="left:1446px;top:744px;width:1px;height:23px;background:#d4d4d4"></div>
<div class="a" style="left:1760px;top:744px;width:1px;height:23px;background:#d4d4d4"></div>
<div class="a" style="left:34px;top:767px;width:1859px;height:1px;background:#a9d08e"></div>
<div class="a" style="left:0;top:767px;width:33px;height:1px;background:linear-gradient(to right,#f0f0f0,#d9d9d9 8px)"></div>
<div class="rn" style="top:745px">29</div>
<div class="t" style="left:37px;top:745px;letter-spacing:0.431px">Uitvaartondernemingen</div>
<div class="t" style="left:245px;top:745px;letter-spacing:-0.133px">Endlis</div>
<div class="t" style="left:688px;top:745px;letter-spacing:0.295px">info@endlis.be</div>
<div class="t" style="left:1048px;top:745px;letter-spacing:0.176px">059703289</div>
<div class="t" style="left:1249px;top:745px;letter-spacing:0.135px">+3259703289</div>
<div class="t" style="left:1450px;top:745px;letter-spacing:0.008px">Hendrik Baelskaai 45</div>
<div class="t" style="left:1764px;top:745px;letter-spacing:0.176px">8400</div>
<div class="a" style="left:34px;top:768px;width:1859px;height:23px;background:#e2efda"></div>
<div class="a" style="left:34px;top:791px;width:1859px;height:1px;background:#a9d08e"></div>
<div class="a" style="left:0;top:791px;width:33px;height:1px;background:linear-gradient(to right,#f0f0f0,#d9d9d9 8px)"></div>
<div class="rn" style="top:769px">30</div>
<div class="t" style="left:37px;top:769px;letter-spacing:0.431px">Uitvaartondernemingen</div>
<div class="t" style="left:245px;top:769px;letter-spacing:-0.154px">De Cock Begrafenissen</div>
<div class="t" style="left:688px;top:769px;letter-spacing:0.343px">info@firmadecock.be</div>
<div class="t" style="left:1048px;top:769px;letter-spacing:0.176px">038273477</div>
<div class="t" style="left:1249px;top:769px;letter-spacing:0.135px">+3238273477</div>
<div class="t" style="left:1450px;top:769px;letter-spacing:0.046px">De Bruynlaan 177</div>
<div class="t" style="left:1764px;top:769px;letter-spacing:0.176px">2660</div>
<div class="a" style="left:34px;top:792px;width:1859px;height:23px;background:#fff"></div>
<div class="a" style="left:241px;top:792px;width:1px;height:23px;background:#d4d4d4"></div>
<div class="a" style="left:684px;top:792px;width:1px;height:23px;background:#d4d4d4"></div>
<div class="a" style="left:1044px;top:792px;width:1px;height:23px;background:#d4d4d4"></div>
<div class="a" style="left:1245px;top:792px;width:1px;height:23px;background:#d4d4d4"></div>
<div class="a" style="left:1446px;top:792px;width:1px;height:23px;background:#d4d4d4"></div>
<div class="a" style="left:1760px;top:792px;width:1px;height:23px;background:#d4d4d4"></div>
<div class="a" style="left:34px;top:815px;width:1859px;height:1px;background:#a9d08e"></div>
<div class="a" style="left:0;top:815px;width:33px;height:1px;background:linear-gradient(to right,#f0f0f0,#d9d9d9 8px)"></div>
<div class="rn" style="top:793px">31</div>
<div class="t" style="left:37px;top:793px;letter-spacing:0.431px">Uitvaartondernemingen</div>
<div class="t" style="left:245px;top:793px;letter-spacing:0.161px">Fraeyman Begrafenisonderneming</div>
<div class="t" style="left:688px;top:793px;letter-spacing:0.435px">info@fraeymanuitvaart.be</div>
<div class="t" style="left:1048px;top:793px;letter-spacing:0.176px">092363600</div>
<div class="t" style="left:1249px;top:793px;letter-spacing:0.135px">+3292363600</div>
<div class="t" style="left:1450px;top:793px;letter-spacing:0.380px">Brouwerijstraat 24</div>
<div class="t" style="left:1764px;top:793px;letter-spacing:0.176px">9880</div>
<div class="a" style="left:34px;top:816px;width:1859px;height:23px;background:#e2efda"></div>
<div class="a" style="left:34px;top:839px;width:1859px;height:1px;background:#a9d08e"></div>
<div class="a" style="left:0;top:839px;width:33px;height:1px;background:linear-gradient(to right,#f0f0f0,#d9d9d9 8px)"></div>
<div class="rn" style="top:817px">32</div>
<div class="t" style="left:37px;top:817px;letter-spacing:0.431px">Uitvaartondernemingen</div>
<div class="t" style="left:245px;top:817px;letter-spacing:0.096px">Funérailles Charleroi</div>
<div class="t" style="left:688px;top:817px;letter-spacing:0.341px">info@funeraillescharleroi.be</div>
<div class="t" style="left:1048px;top:817px;letter-spacing:0.176px">071417251</div>
<div class="t" style="left:1249px;top:817px;letter-spacing:0.135px">+3271417251</div>
<div class="t" style="left:1450px;top:817px;letter-spacing:0.093px">Chau. de Lodelinsart 211</div>
<div class="t" style="left:1764px;top:817px;letter-spacing:0.176px">6060</div>
<div class="a" style="left:34px;top:840px;width:1859px;height:23px;background:#fff"></div>
<div class="a" style="left:241px;top:840px;width:1px;height:23px;background:#d4d4d4"></div>
<div class="a" style="left:684px;top:840px;width:1px;height:23px;background:#d4d4d4"></div>
<div class="a" style="left:1044px;top:840px;width:1px;height:23px;background:#d4d4d4"></div>
<div class="a" style="left:1245px;top:840px;width:1px;height:23px;background:#d4d4d4"></div>
<div class="a" style="left:1446px;top:840px;width:1px;height:23px;background:#d4d4d4"></div>
<div class="a" style="left:1760px;top:840px;width:1px;height:23px;background:#d4d4d4"></div>
<div class="a" style="left:34px;top:863px;width:1859px;height:1px;background:#a9d08e"></div>
<div class="a" style="left:0;top:863px;width:33px;height:1px;background:linear-gradient(to right,#f0f0f0,#d9d9d9 8px)"></div>
<div class="rn" style="top:841px">33</div>
<div class="t" style="left:37px;top:841px;letter-spacing:0.431px">Uitvaartondernemingen</div>
<div class="t" style="left:245px;top:841px;letter-spacing:-0.108px">Funérailles De La Haute Senne</div>
<div class="t" style="left:688px;top:841px;letter-spacing:0.292px">info@funerailles-hautesenne.be</div>
<div class="t" style="left:1048px;top:841px;letter-spacing:0.176px">067332747</div>
<div class="t" style="left:1249px;top:841px;letter-spacing:0.135px">+3267332747</div>
<div class="t" style="left:1450px;top:841px;letter-spacing:-0.036px">Rue Centrale 49</div>
<div class="t" style="left:1764px;top:841px;letter-spacing:0.176px">7063</div>
<div class="a" style="left:1893px;top:71px;width:1px;height:794px;background:#dcdcdc"></div>
<div class="a" style="left:0;top:864px;width:1894px;height:1px;background:#e2e2e2"></div>
<div class="a" style="left:1897px;top:48px;width:20px;height:819px;background:#f5f5f5;border-radius:10px"></div>
<svg class="a" style="left:1901px;top:53px" width="13" height="11" viewBox="0 0 13 11"><path d="M6.5 2.2 L11.5 9 L1.5 9 Z" fill="#707070" stroke="#707070" stroke-width="1.2" stroke-linejoin="round"/></svg>
<div class="a" style="left:1902px;top:69px;width:11px;height:23px;background:#707070;border-radius:5.5px"></div>
<svg class="a" style="left:1901px;top:852px" width="13" height="11" viewBox="0 0 13 11"><path d="M6.5 9 L11.5 2 L1.5 2 Z" fill="#707070" stroke="#707070" stroke-width="1.2" stroke-linejoin="round"/></svg>
<svg class="a" style="left:30px;top:877px" width="11" height="14" viewBox="0 0 11 14"><path d="M9 1 L2.5 7 L9 13" fill="none" stroke="#8a8a8a" stroke-width="1.3"/></svg>
<svg class="a" style="left:71px;top:877px" width="11" height="14" viewBox="0 0 11 14"><path d="M2 1 L8.5 7 L2 13" fill="none" stroke="#8a8a8a" stroke-width="1.3"/></svg>
<div class="a" style="left:140px;top:865px;width:265px;height:40px;background:#fff;border-radius:6px 6px 0 0"></div>
<div class="t" style="left:152px;top:871px;font-size:18px;letter-spacing:0.17px;-webkit-text-stroke:0.35px #242424;color:#242424">Uitvaartondernemingen België</div>
<div class="a" style="left:151px;top:895px;width:244px;height:2px;background:#107c41"></div>
<div class="a" style="left:410px;top:873px;width:1px;height:24px;background:#cdcdcd"></div>
<svg class="a" style="left:462px;top:876px" width="16" height="16" viewBox="0 0 16 16"><path d="M8 1 L8 15 M1 8 L15 8" stroke="#333" stroke-width="1.4"/></svg>
<div class="a" style="left:1154px;top:879px;width:3px;height:3px;background:#2a2a2a"></div>
<div class="a" style="left:1154px;top:884px;width:3px;height:3px;background:#2a2a2a"></div>
<div class="a" style="left:1154px;top:889px;width:3px;height:3px;background:#2a2a2a"></div>
<div class="a" style="left:1176px;top:874px;width:721px;height:21px;background:#f4f4f4;border-radius:10.5px"></div>
<svg class="a" style="left:1181px;top:878px" width="11" height="13" viewBox="0 0 11 13"><path d="M2 6.5 L9 1.8 L9 11.2 Z" fill="#707070" stroke="#707070" stroke-width="1.2" stroke-linejoin="round"/></svg>
<div class="a" style="left:1197px;top:879px;width:393px;height:11px;background:#707070;border-radius:5.5px"></div>
<svg class="a" style="left:1881px;top:878px" width="11" height="13" viewBox="0 0 11 13"><path d="M9 6.5 L2 1.8 L2 11.2 Z" fill="#707070" stroke="#707070" stroke-width="1.2" stroke-linejoin="round"/></svg>
</body></html>
